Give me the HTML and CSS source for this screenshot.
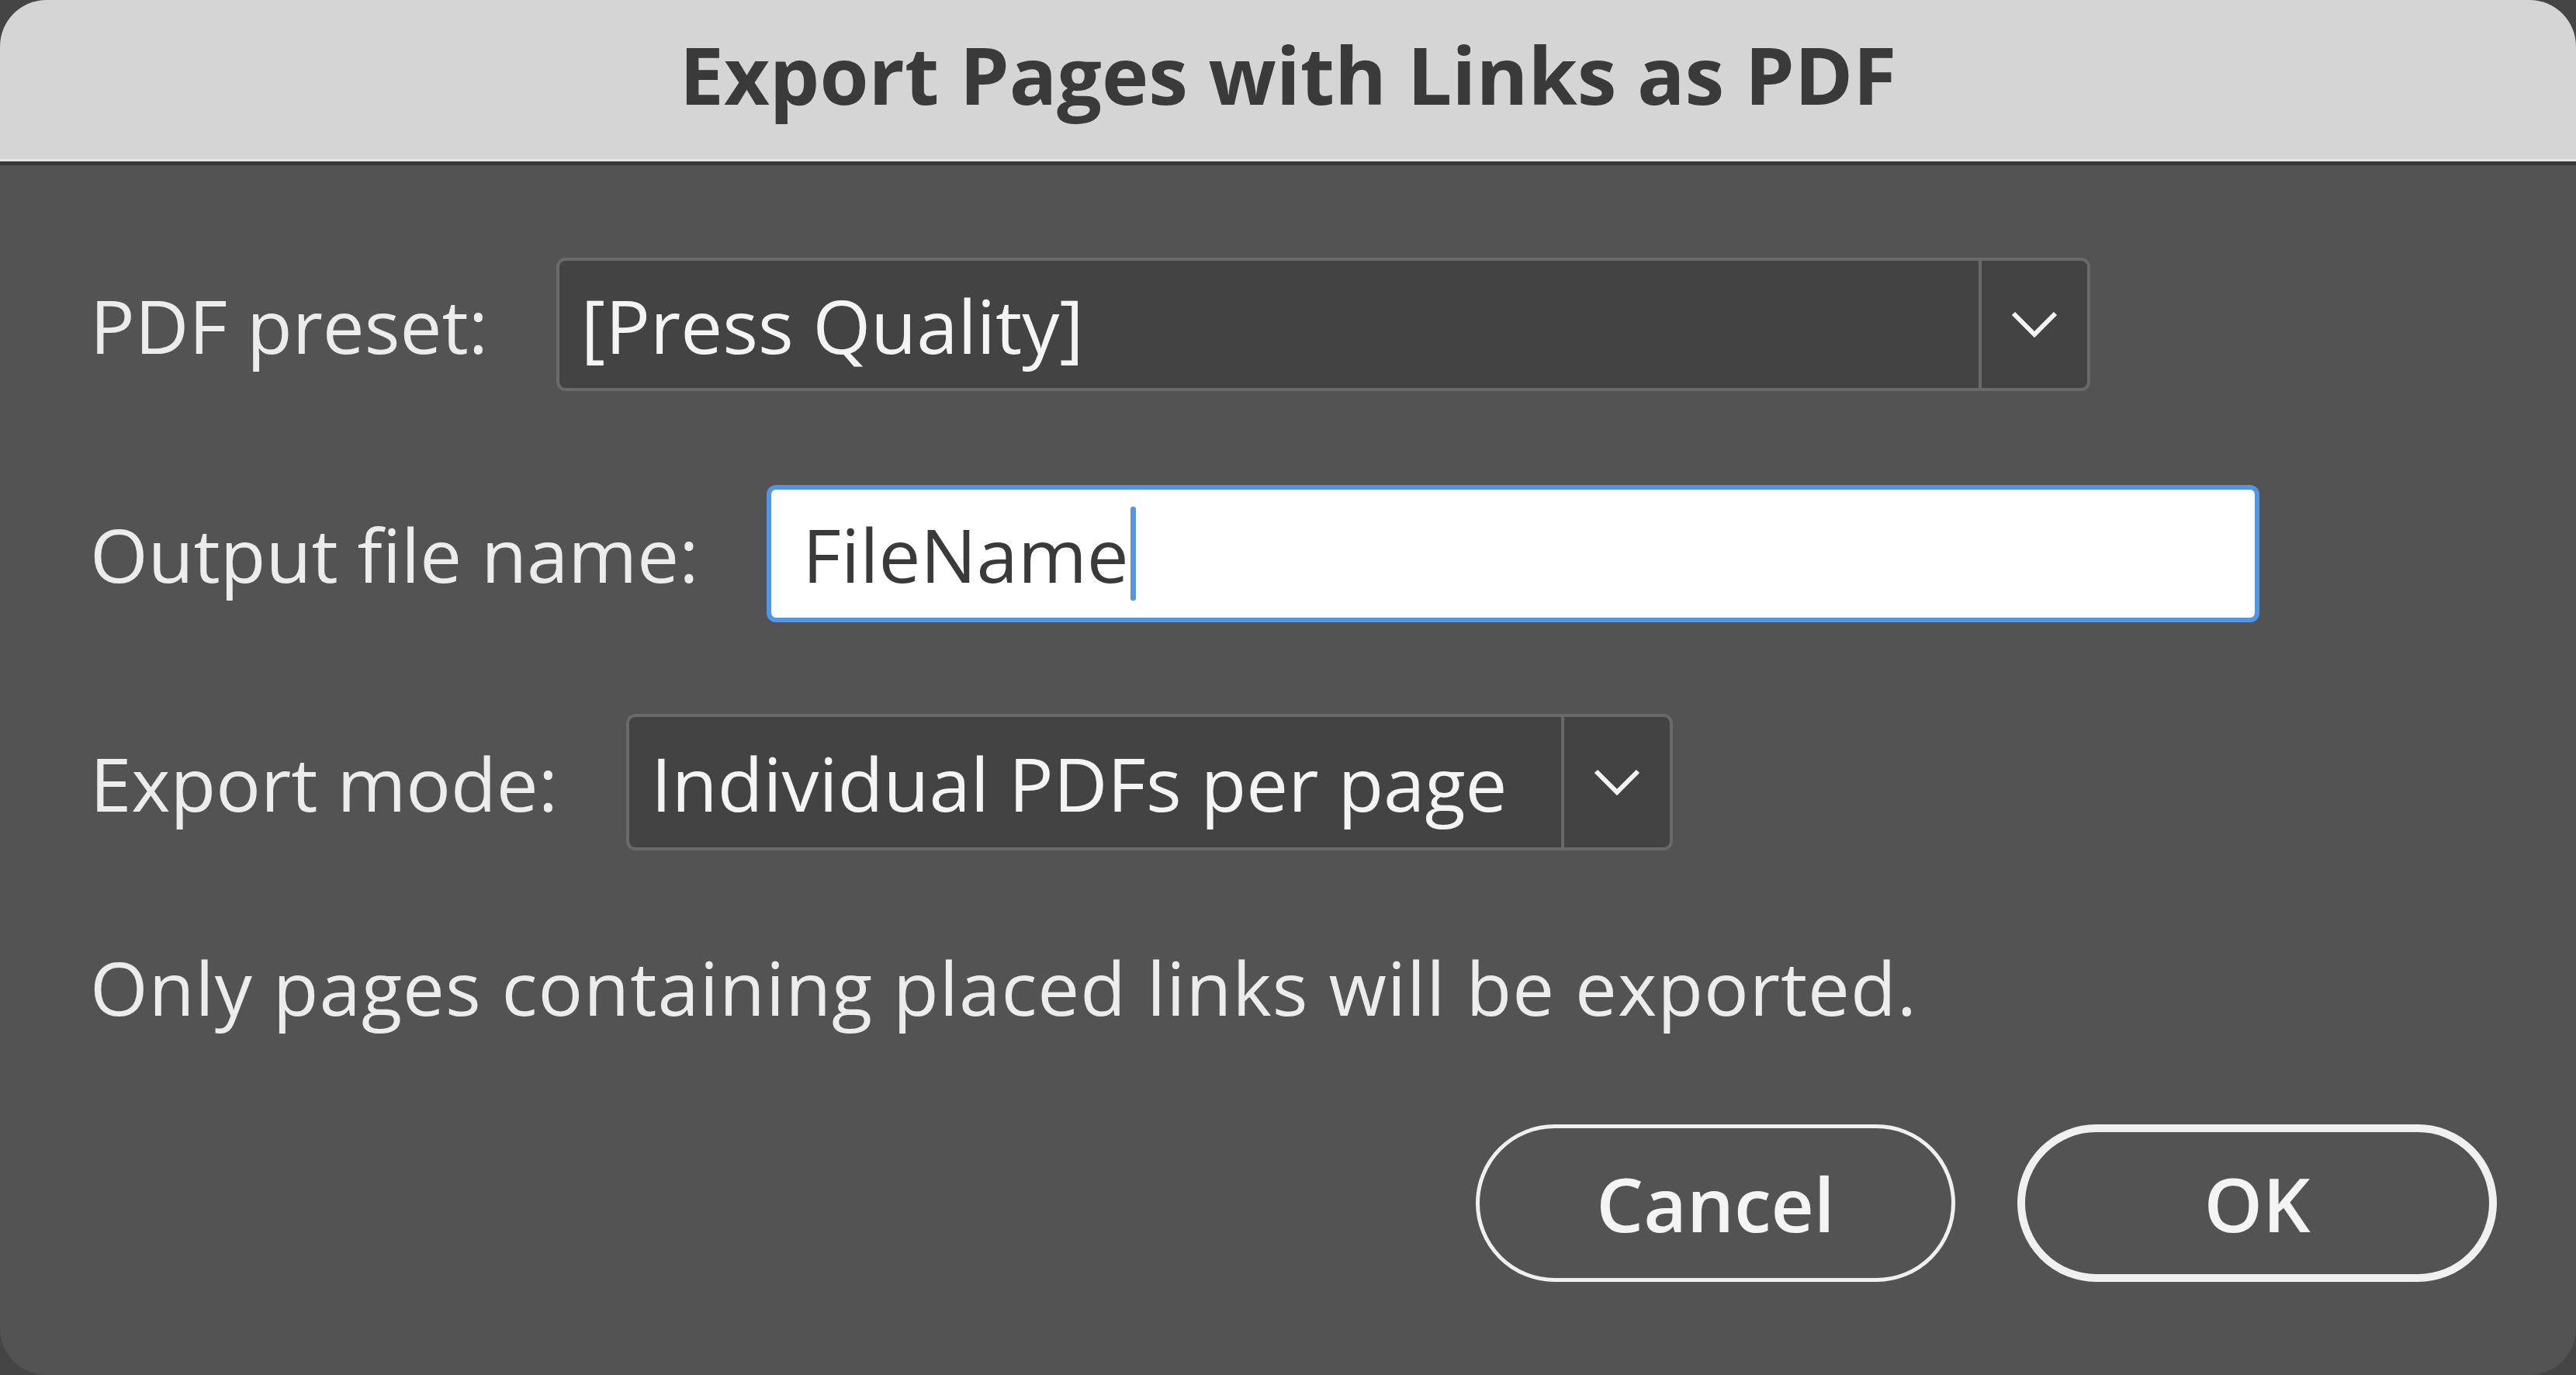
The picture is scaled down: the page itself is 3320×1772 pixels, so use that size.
FILE: index.html
```html
<!DOCTYPE html>
<html lang="en">
<head>
    <meta charset="UTF-8">
    <meta name="viewport" content="width=device-width, initial-scale=1.0">
    <title>Export Pages with Links as PDF</title>
    <link rel="stylesheet" href="styles.css">
</head>
<body>
    <div class="dialog">
        <div class="titlebar">Export Pages with Links as PDF</div>

        <div class="content">
            <div class="row row-preset">
                <span class="label">PDF preset:</span>
                <div class="select select-preset">
                    <span class="select-value">[Press Quality]</span>
                    <span class="select-arrow">
                        <svg width="60" height="34" viewBox="0 0 60 34"><polyline points="3,3 30,30 57,3" fill="none" stroke="#f4f4f4" stroke-width="6"/></svg>
                    </span>
                </div>
            </div>

            <div class="row row-output">
                <span class="label">Output file name:</span>
                <div class="textfield">
                    <span class="textfield-value">FileName</span><span class="caret"></span>
                </div>
            </div>

            <div class="row row-mode">
                <span class="label">Export mode:</span>
                <div class="select select-mode">
                    <span class="select-value">Individual PDFs per page</span>
                    <span class="select-arrow">
                        <svg width="60" height="34" viewBox="0 0 60 34"><polyline points="3,3 30,30 57,3" fill="none" stroke="#f4f4f4" stroke-width="6"/></svg>
                    </span>
                </div>
            </div>

            <p class="note">Only pages containing placed links will be exported.</p>

            <div class="buttons">
                <button class="btn">Cancel</button>
                <button class="btn btn-default">OK</button>
            </div>
        </div>
    </div>
</body>
</html>
```

FILE: styles.css
```css
html, body {
    margin: 0;
    padding: 0;
    background: #454545;
}
body {
    font-family: "Open Sans", "Noto Sans", sans-serif;
    width: 3320px;
    height: 1772px;
    overflow: hidden;
}
.dialog {
    width: 3320px;
    height: 1772px;
    background: #535353;
    border-radius: 60px;
    overflow: hidden;
    display: flex;
    flex-direction: column;
}
.titlebar {
    height: 190px;
    padding-bottom: 18px;
    background: #d5d5d5;
    border-bottom: 5px solid #383838;
    box-shadow: inset 0 -3px 0 #e6e6e6;
    color: #3a3a3a;
    font-weight: 700;
    font-size: 102px;
    display: flex;
    align-items: center;
    justify-content: center;
    flex-shrink: 0;
}
.content {
    padding: 0 102px 0 116px;
    color: #ececec;
    font-size: 96px;
}
.row {
    display: flex;
    align-items: center;
    gap: 88px;
}
.row-preset {
    margin-top: 119px;
    height: 172px;
}
.row-output {
    margin-top: 121px;
    height: 177px;
}
.row-mode {
    margin-top: 118px;
    height: 176px;
}
.label {
    white-space: nowrap;
}
.select {
    display: flex;
    height: 100%;
    box-sizing: border-box;
    background: #434343;
    border: 4px solid #6a6a6a;
    border-radius: 12px;
}
.select-preset {
    width: 1977px;
}
.select-mode {
    width: 1349px;
}
.select-value {
    flex: 1;
    display: flex;
    align-items: center;
    padding-left: 28px;
    white-space: nowrap;
    color: #f4f4f4;
}
.select-arrow {
    width: 136px;
    border-left: 4px solid #6a6a6a;
    display: flex;
    align-items: center;
    justify-content: center;
}
.textfield {
    width: 1924px;
    height: 100%;
    box-sizing: border-box;
    background: #ffffff;
    border: 6px solid #4f95e8;
    border-radius: 12px;
    display: flex;
    align-items: center;
    padding-left: 40px;
    color: #3a3a3a;
}
.caret {
    display: inline-block;
    width: 7px;
    height: 121px;
    margin-left: 2px;
    background: #4f95e8;
    border-radius: 3px;
}
.note {
    margin: 118px 0 0 0;
    line-height: 1.2;
    letter-spacing: 1px;
    white-space: nowrap;
}
.buttons {
    display: flex;
    justify-content: flex-end;
    gap: 80px;
    margin-top: 120px;
}
.btn {
    width: 618px;
    height: 203px;
    box-sizing: border-box;
    border-radius: 102px;
    border: 5px solid #f0f0f0;
    background: transparent;
    color: #f4f4f4;
    font-family: inherit;
    font-size: 96px;
    font-weight: 600;
}
.btn-default {
    border-width: 10px;
}
```
